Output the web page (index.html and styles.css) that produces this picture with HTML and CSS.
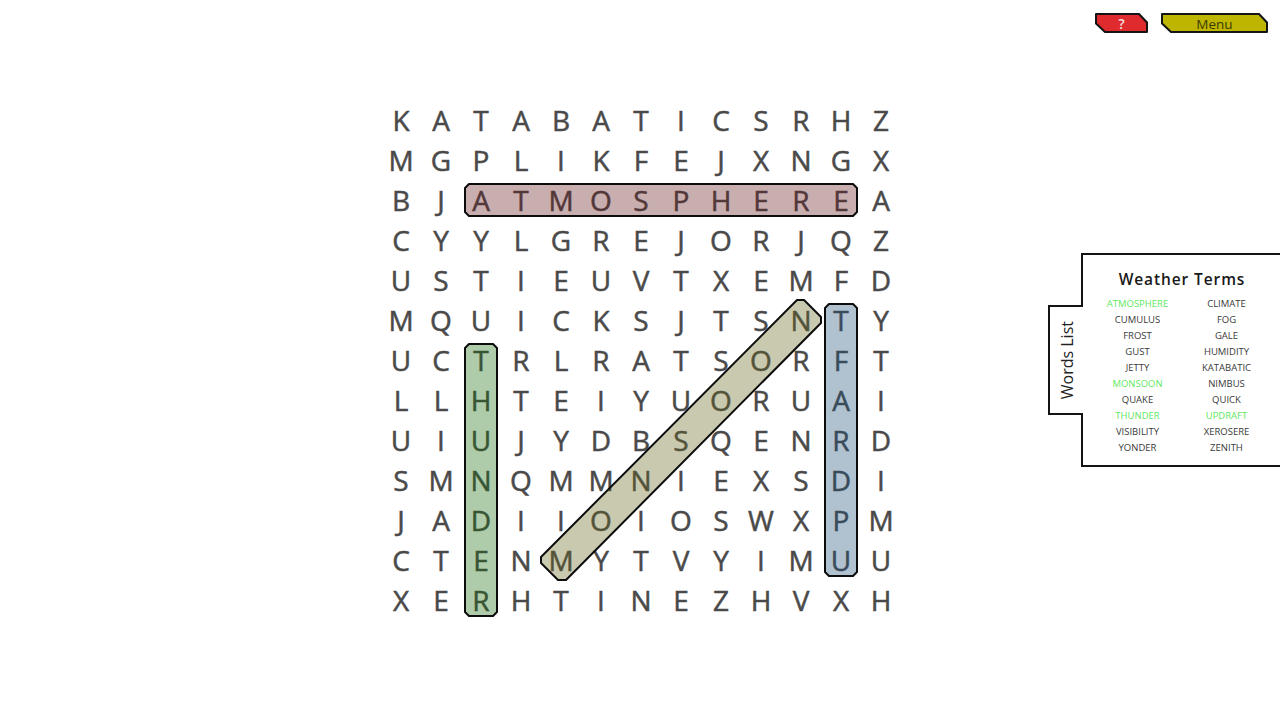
FILE: index.html
```html
<!DOCTYPE html>
<html lang="en">
<head>
<meta charset="utf-8">
<title>Weather Terms</title>
<link rel="stylesheet" href="styles.css">
</head>
<body>
<div class="page">
  <header class="topbar">
    <button class="btn btn-help" type="button">
      <svg class="btn-shape" viewBox="0 0 53 20"><polygon points="1,1 44,1 52,9.500 52,19 10,19 1,10.500"/></svg>
      <span class="btn-label">?</span>
    </button>
    <button class="btn btn-menu" type="button">
      <svg class="btn-shape" viewBox="0 0 107 20"><polygon points="1,1 98,1 106,9.500 106,19 10,19 1,10.500"/></svg>
      <span class="btn-label">Menu</span>
    </button>
  </header>

  <main class="board">
    <div class="grid">
      <span>K</span><span>A</span><span>T</span><span>A</span><span>B</span><span>A</span><span>T</span><span>I</span><span>C</span><span>S</span><span>R</span><span>H</span><span>Z</span>
      <span>M</span><span>G</span><span>P</span><span>L</span><span>I</span><span>K</span><span>F</span><span>E</span><span>J</span><span>X</span><span>N</span><span>G</span><span>X</span>
      <span>B</span><span>J</span><span>A</span><span>T</span><span>M</span><span>O</span><span>S</span><span>P</span><span>H</span><span>E</span><span>R</span><span>E</span><span>A</span>
      <span>C</span><span>Y</span><span>Y</span><span>L</span><span>G</span><span>R</span><span>E</span><span>J</span><span>O</span><span>R</span><span>J</span><span>Q</span><span>Z</span>
      <span>U</span><span>S</span><span>T</span><span>I</span><span>E</span><span>U</span><span>V</span><span>T</span><span>X</span><span>E</span><span>M</span><span>F</span><span>D</span>
      <span>M</span><span>Q</span><span>U</span><span>I</span><span>C</span><span>K</span><span>S</span><span>J</span><span>T</span><span>S</span><span>N</span><span>T</span><span>Y</span>
      <span>U</span><span>C</span><span>T</span><span>R</span><span>L</span><span>R</span><span>A</span><span>T</span><span>S</span><span>O</span><span>R</span><span>F</span><span>T</span>
      <span>L</span><span>L</span><span>H</span><span>T</span><span>E</span><span>I</span><span>Y</span><span>U</span><span>O</span><span>R</span><span>U</span><span>A</span><span>I</span>
      <span>U</span><span>I</span><span>U</span><span>J</span><span>Y</span><span>D</span><span>B</span><span>S</span><span>Q</span><span>E</span><span>N</span><span>R</span><span>D</span>
      <span>S</span><span>M</span><span>N</span><span>Q</span><span>M</span><span>M</span><span>N</span><span>I</span><span>E</span><span>X</span><span>S</span><span>D</span><span>I</span>
      <span>J</span><span>A</span><span>D</span><span>I</span><span>I</span><span>O</span><span>I</span><span>O</span><span>S</span><span>W</span><span>X</span><span>P</span><span>M</span>
      <span>C</span><span>T</span><span>E</span><span>N</span><span>M</span><span>Y</span><span>T</span><span>V</span><span>Y</span><span>I</span><span>M</span><span>U</span><span>U</span>
      <span>X</span><span>E</span><span>R</span><span>H</span><span>T</span><span>I</span><span>N</span><span>E</span><span>Z</span><span>H</span><span>V</span><span>X</span><span>H</span>
    </div>
    <svg class="marks" viewBox="0 0 520 520">
      <polygon class="mark mark-pink" points="89,84 473,84 477,88 477,112 473,116 89,116 85,112 85,88"/>
      <polygon class="mark mark-green" points="89,244 113,244 117,248 117,512 113,516 89,516 85,512 85,248"/>
      <polygon class="mark mark-blue" points="449,204 473,204 477,208 477,472 473,476 449,476 445,472 445,208"/>
      <polygon class="mark mark-olive" points="417,200 424,200 441,217 441,223 186,480 178,480 161,463 161,457"/>
    </svg>
  </main>

  <aside class="side">
    <div class="tab"><span class="tab-label">Words List</span></div>
    <section class="panel">
      <h1 class="panel-title">Weather Terms</h1>
      <ul class="words">
        <li class="found">ATMOSPHERE</li><li>CLIMATE</li>
        <li>CUMULUS</li><li>FOG</li>
        <li>FROST</li><li>GALE</li>
        <li>GUST</li><li>HUMIDITY</li>
        <li>JETTY</li><li>KATABATIC</li>
        <li class="found">MONSOON</li><li>NIMBUS</li>
        <li>QUAKE</li><li>QUICK</li>
        <li class="found">THUNDER</li><li class="found">UPDRAFT</li>
        <li>VISIBILITY</li><li>XEROSERE</li>
        <li>YONDER</li><li>ZENITH</li>
      </ul>
    </section>
  </aside>
</div>
</body>
</html>
```
FILE: styles.css
```css
* { box-sizing: border-box; }

html, body {
  margin: 0;
  height: 100%;
  background: #fff;
  overflow: hidden;
  font-family: "Open Sans", "Liberation Sans", sans-serif;
}

.page {
  display: grid;
  grid-template-columns: 1fr 520px 1fr;
  grid-template-rows: 100px 520px;
  width: 1280px;
  height: 720px;
}

.topbar {
  grid-column: 1 / -1;
  grid-row: 1;
  display: flex;
  justify-content: flex-end;
  align-items: flex-start;
  gap: 13px;
  padding: 13px 12px 0 0;
}

.btn {
  position: relative;
  display: flex;
  align-items: center;
  justify-content: center;
  height: 20px;
  padding: 1px 0 0;
  border: 0;
  background: none;
  font: 400 13.500px/20px "Open Sans", sans-serif;
}

.btn-help { width: 53px; color: #f6e3e3; font-weight: 600; }
.btn-menu { width: 107px; color: #3d3a05; }

.btn-shape {
  position: absolute;
  inset: 0;
  width: 100%;
  height: 100%;
}

.btn-shape polygon {
  stroke: #141414;
  stroke-width: 2;
  stroke-linejoin: round;
}

.btn-help polygon { fill: #df2a2e; }
.btn-menu polygon { fill: #bdb500; }

.btn-label { position: relative; }

.board {
  grid-column: 2;
  grid-row: 2;
  position: relative;
  width: 520px;
  height: 520px;
}

.grid {
  display: grid;
  grid-template-columns: repeat(13, 40px);
  grid-auto-rows: 40px;
  padding-left: 1px;
}

.grid span {
  display: flex;
  align-items: center;
  justify-content: center;
  font-size: 28px;
  line-height: 40px;
  color: #4a4a4a;
  -webkit-text-stroke: 0.5px #4a4a4a;
}

.marks {
  position: absolute;
  inset: 0;
  width: 520px;
  height: 520px;
  overflow: visible;
}

.mark {
  stroke: #0c0c0c;
  stroke-width: 2;
  stroke-linejoin: round;
}

.mark-pink { fill: rgba(100, 23, 29, 0.35); }
.mark-green { fill: rgba(23, 106, 12, 0.35); }
.mark-blue { fill: rgba(28, 76, 120, 0.35); }
.mark-olive { fill: rgba(100, 100, 30, 0.35); }

.side {
  grid-column: 3;
  grid-row: 2;
  display: flex;
  justify-content: flex-end;
  align-items: flex-start;
  padding-top: 153px;
}

.tab {
  position: relative;
  z-index: 1;
  display: flex;
  align-items: center;
  justify-content: center;
  width: 35px;
  height: 110px;
  margin-top: 52px;
  margin-right: -2px;
  background: #fff;
  border: 2px solid #141414;
  border-right: 0;
}

.tab-label {
  writing-mode: vertical-rl;
  transform: rotate(180deg);
  font-size: 16px;
  line-height: 20px;
  color: #222;
}

.panel {
  width: 199px;
  height: 214px;
  padding: 13px 0 0 1px;
  background: #fff;
  border: 2px solid #141414;
  border-right: 0;
}

.panel-title {
  margin: 0 0 6px 0;
  text-align: center;
  font-size: 15.500px;
  font-weight: 600;
  line-height: 22px;
  letter-spacing: 0.9px;
  color: #1a1a1a;
}

.words {
  display: grid;
  grid-template-columns: 89px 89px;
  grid-auto-rows: 16px;
  justify-content: center;
  margin: 0;
  padding: 0;
  list-style: none;
  font-size: 9.500px;
  line-height: 16px;
  text-align: center;
  color: #3a3a3a;
}

.found { color: #62e862; }
```
